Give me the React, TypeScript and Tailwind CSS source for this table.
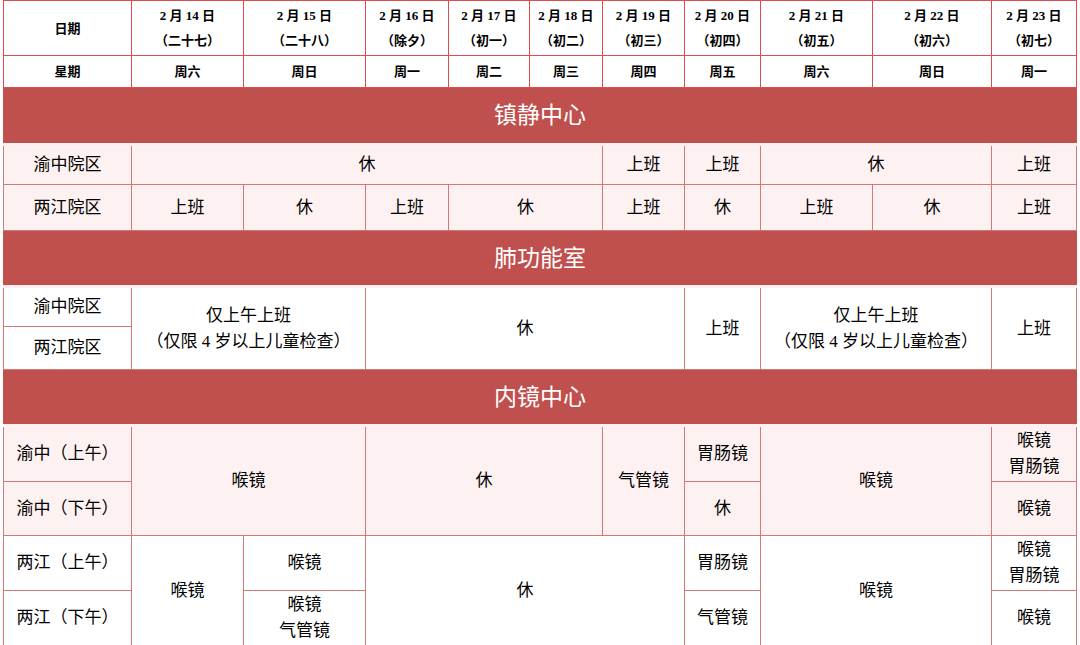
import React from "react";

const H = "border-r border-b border-[#e04b4b] bg-white flex flex-col items-center justify-center text-[13px] font-bold leading-[25px] text-black";
const P = "border-r border-b border-[#d67878] bg-[#fdf1f1] flex flex-col items-center justify-center text-[17px] leading-[26px] text-black";
const W = "border-r border-b border-[#d67878] bg-white flex flex-col items-center justify-center text-[17px] leading-[26px] text-black";
const BAND = "col-start-1 col-span-11 bg-[#c0504d] border-b-[3px] border-b-[#fdf0f0] flex items-center justify-center text-white text-[23px] pt-[2px]";

const dates = [
  ["2 月 14 日", "（二十七）", "周六"],
  ["2 月 15 日", "（二十八）", "周日"],
  ["2 月 16 日", "（除夕）", "周一"],
  ["2 月 17 日", "（初一）", "周二"],
  ["2 月 18 日", "（初二）", "周三"],
  ["2 月 19 日", "（初三）", "周四"],
  ["2 月 20 日", "（初四）", "周五"],
  ["2 月 21 日", "（初五）", "周六"],
  ["2 月 22 日", "（初六）", "周日"],
  ["2 月 23 日", "（初七）", "周一"],
];

export default function App() {
  return (
    <div className="w-[1080px] h-[645px] bg-white overflow-hidden font-['Liberation_Serif','Noto_Sans_CJK_SC',serif]">
      <div className="ml-[3px] w-[1074px] grid grid-cols-[129px_112px_122px_83px_81px_73px_82px_76px_112px_119px_85px] grid-rows-[55px_32px_58px_39px_46px_57px_39px_43px_57px_55px_54px_55px_55px] border-t border-[#e04b4b]">
        {/* Header */}
        <div className={`${H} col-start-1 row-start-1 border-l`}>日期</div>
        <div className={`${H} col-start-1 row-start-2 border-l`}>星期</div>
        {dates.map((d, i) => (
          <React.Fragment key={i}>
            <div className={H} style={{ gridColumnStart: i + 2, gridRowStart: 1 }}>
              <span>{d[0]}</span>
              <span>{d[1]}</span>
            </div>
            <div className={H} style={{ gridColumnStart: i + 2, gridRowStart: 2 }}>{d[2]}</div>
          </React.Fragment>
        ))}

        {/* 镇静中心 */}
        <div className={`${BAND} row-start-3`}>镇静中心</div>
        <div className={`${P} col-start-1 row-start-4 border-l`}>渝中院区</div>
        <div className={`${P} col-start-2 col-span-5 row-start-4`}>休</div>
        <div className={`${P} col-start-7 row-start-4`}>上班</div>
        <div className={`${P} col-start-8 row-start-4`}>上班</div>
        <div className={`${P} col-start-9 col-span-2 row-start-4`}>休</div>
        <div className={`${P} col-start-11 row-start-4`}>上班</div>

        <div className={`${P} col-start-1 row-start-5 border-l`}>两江院区</div>
        <div className={`${P} col-start-2 row-start-5`}>上班</div>
        <div className={`${P} col-start-3 row-start-5`}>休</div>
        <div className={`${P} col-start-4 row-start-5`}>上班</div>
        <div className={`${P} col-start-5 col-span-2 row-start-5`}>休</div>
        <div className={`${P} col-start-7 row-start-5`}>上班</div>
        <div className={`${P} col-start-8 row-start-5`}>休</div>
        <div className={`${P} col-start-9 row-start-5`}>上班</div>
        <div className={`${P} col-start-10 row-start-5`}>休</div>
        <div className={`${P} col-start-11 row-start-5`}>上班</div>

        {/* 肺功能室 */}
        <div className={`${BAND} row-start-6`}>肺功能室</div>
        <div className={`${W} col-start-1 row-start-7 border-l`}>渝中院区</div>
        <div className={`${W} col-start-1 row-start-8 border-l`}>两江院区</div>
        <div className={`${W} col-start-2 col-span-2 row-start-7 row-span-2`}>
          <span>仅上午上班</span>
          <span>（仅限 4 岁以上儿童检查）</span>
        </div>
        <div className={`${W} col-start-4 col-span-4 row-start-7 row-span-2`}>休</div>
        <div className={`${W} col-start-8 row-start-7 row-span-2`}>上班</div>
        <div className={`${W} col-start-9 col-span-2 row-start-7 row-span-2`}>
          <span>仅上午上班</span>
          <span>（仅限 4 岁以上儿童检查）</span>
        </div>
        <div className={`${W} col-start-11 row-start-7 row-span-2`}>上班</div>

        {/* 内镜中心 */}
        <div className={`${BAND} row-start-9`}>内镜中心</div>
        <div className={`${P} col-start-1 row-start-10 border-l`}>渝中（上午）</div>
        <div className={`${P} col-start-1 row-start-11 border-l`}>渝中（下午）</div>
        <div className={`${P} col-start-2 col-span-2 row-start-10 row-span-2`}>喉镜</div>
        <div className={`${P} col-start-4 col-span-3 row-start-10 row-span-2`}>休</div>
        <div className={`${P} col-start-7 row-start-10 row-span-2`}>气管镜</div>
        <div className={`${P} col-start-8 row-start-10`}>胃肠镜</div>
        <div className={`${P} col-start-8 row-start-11`}>休</div>
        <div className={`${P} col-start-9 col-span-2 row-start-10 row-span-2`}>喉镜</div>
        <div className={`${P} col-start-11 row-start-10`}>
          <span>喉镜</span>
          <span>胃肠镜</span>
        </div>
        <div className={`${P} col-start-11 row-start-11`}>喉镜</div>

        <div className={`${W} col-start-1 row-start-12 border-l`}>两江（上午）</div>
        <div className={`${W} col-start-1 row-start-13 border-l`}>两江（下午）</div>
        <div className={`${W} col-start-2 row-start-12 row-span-2`}>喉镜</div>
        <div className={`${W} col-start-3 row-start-12`}>喉镜</div>
        <div className={`${W} col-start-3 row-start-13`}>
          <span>喉镜</span>
          <span>气管镜</span>
        </div>
        <div className={`${W} col-start-4 col-span-4 row-start-12 row-span-2`}>休</div>
        <div className={`${W} col-start-8 row-start-12`}>胃肠镜</div>
        <div className={`${W} col-start-8 row-start-13`}>气管镜</div>
        <div className={`${W} col-start-9 col-span-2 row-start-12 row-span-2`}>喉镜</div>
        <div className={`${W} col-start-11 row-start-12`}>
          <span>喉镜</span>
          <span>胃肠镜</span>
        </div>
        <div className={`${W} col-start-11 row-start-13`}>喉镜</div>
      </div>
    </div>
  );
}
